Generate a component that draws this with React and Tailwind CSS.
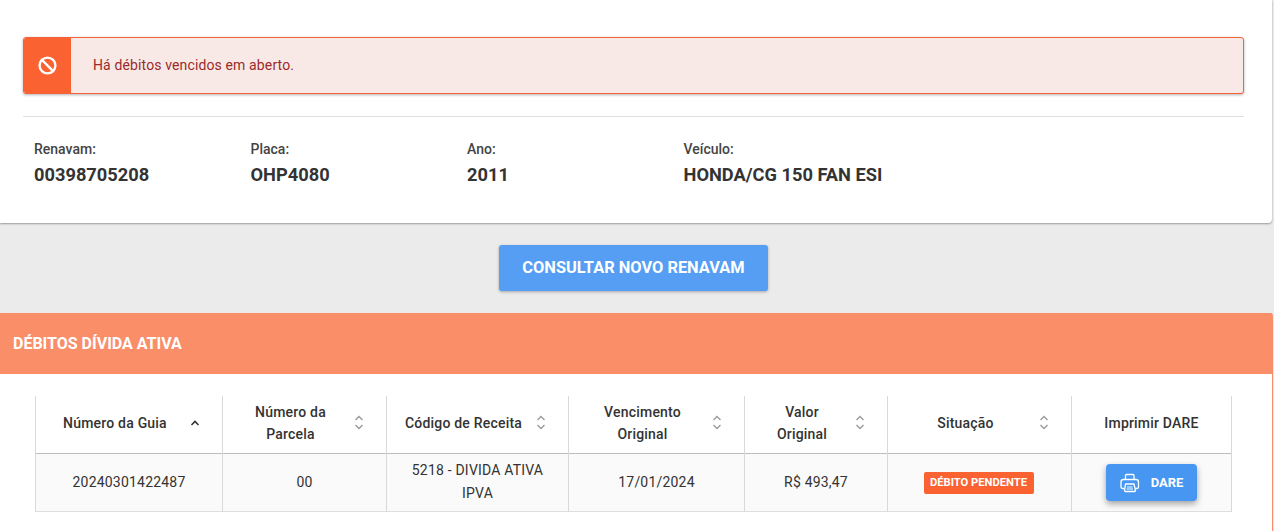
import React from "react";
import { Ban } from "lucide-react";

const cols = [
  { label: "Número da Guia", w: "w-[187px]", sort: "asc" },
  { label: "Número da Parcela", w: "w-[164px]", sort: "both", text: "w-[110px]" },
  { label: "Código de Receita", w: "w-[182px]", sort: "both" },
  { label: "Vencimento Original", w: "w-[176px]", sort: "both", text: "w-[120px]" },
  { label: "Valor Original", w: "w-[143px]", sort: "both", text: "w-[90px]" },
  { label: "Situação", w: "w-[184px]", sort: "both" },
  { label: "Imprimir DARE", w: "w-[160px]" },
];

function SortIcon({ type }) {
  if (type === "asc") {
    return (
      <svg width="10" height="6" viewBox="0 0 10 6" fill="none" stroke="#333" strokeWidth="1.6">
        <path d="M1.5 5 5 1.5 8.500 5" />
      </svg>
    );
  }
  return (
    <svg width="10" height="15" viewBox="0 0 10 15" fill="none" stroke="#9a9a9a" strokeWidth="1.4">
      <path d="M1.500 5 5 1.500 8.500 5" />
      <path d="M1.500 10 5 13.500 8.500 10" />
    </svg>
  );
}

function PrintIcon() {
  return (
    <svg width="20" height="20" viewBox="0 0 20 20" fill="none" stroke="#fff" strokeWidth="1.3" strokeLinejoin="round">
      <path d="M5.500 6.500V2.500a1 1 0 0 1 1-1h6.500a1 1 0 0 1 1 1v4" />
      <path d="M4 15.500H2.500a1.500 1.500 0 0 1-1.500-1.500v-5a2.500 2.500 0 0 1 2.500-2.500h12.500a2.500 2.500 0 0 1 2.500 2.500v5a1.500 1.500 0 0 1-1.500 1.500H15.500" />
      <path d="M5.500 11h8.500l1.500 6.500a1 1 0 0 1-1 1h-9a1 1 0 0 1-1-1z" />
      <path d="M7 14h5.500M6.500 16h6.500" strokeWidth="1" />
    </svg>
  );
}

function Info({ label, value, w }) {
  return (
    <div className={`${w} px-[11px]`}>
      <div className="text-[14px] font-medium leading-[20px] text-[#444]">{label}</div>
      <div className="mt-[3px] text-[18.250px] font-bold leading-[25px] text-[#333]">{value}</div>
    </div>
  );
}

export default function App() {
  return (
    <div className="h-[531px] overflow-hidden bg-[#ebebeb] font-['Roboto',sans-serif]">
      <div className="mr-[2px] h-[223px] rounded-br-[4px] bg-white px-[23px] pr-[28px] pt-[37px] shadow-[0_1px_2px_rgba(0,0,0,0.35)]">
        <div className="flex h-[57px] overflow-hidden rounded-[3px] border border-[#f4623a] bg-[#f8e9e6] shadow-[0_1px_3px_rgba(0,0,0,0.3)]">
          <div className="flex w-[47px] items-center justify-center bg-[#fb6232]">
            <Ban size={19} color="#fff" strokeWidth={3} />
          </div>
          <div className="flex items-center pl-[22px] text-[14px] tracking-[0.13px] text-[#9c2a2a]">
            Há débitos vencidos em aberto.
          </div>
        </div>
        <div className="mt-[22px] flex border-t border-[#e0e0e0] pt-[22px]">
          <Info label="Renavam:" value="00398705208" w="w-[216.500px]" />
          <Info label="Placa:" value="OHP4080" w="w-[216.500px]" />
          <Info label="Ano:" value="2011" w="w-[216.500px]" />
          <Info label="Veículo:" value="HONDA/CG 150 FAN ESI" w="w-[400px]" />
        </div>
      </div>

      <div className="flex h-[90px] items-center justify-center pr-[7px]">
        <button className="h-[46px] w-[269px] rounded-[3px] bg-[#559ef3] pt-[1px] text-[16.400px] font-bold text-white shadow-[0_1px_3px_rgba(0,0,0,0.3)]">
          CONSULTAR NOVO RENAVAM
        </button>
      </div>

      <div className="mr-[1px] h-[218px] rounded-tr-[3px] border-r border-[#f98e69] bg-white">
        <div className="flex h-[61px] items-center bg-[#f98e69] pl-[13px] text-[16px] font-bold text-white">
          DÉBITOS DÍVIDA ATIVA
        </div>
        <div className="pl-[35px] pt-[22px]">
          <table className="w-[1197px] table-fixed border-collapse text-[14px] text-[#333]">
            <thead>
              <tr className="h-[57px] border-b border-[#bdbdbd]">
                {cols.map((c) => (
                  <th key={c.label} className={`${c.w} border-x border-[#d9d9d9] p-0 pb-[3px] font-medium`}>
                    <div className="relative flex items-center justify-center leading-[22px] tracking-[0.2px]">
                      <span className={`${c.text || ""} ${c.sort ? "pr-[28px]" : ""}`}>{c.label}</span>
                      {c.sort && (
                        <span className="absolute right-[22px] flex items-center">
                          <SortIcon type={c.sort} />
                        </span>
                      )}
                    </div>
                  </th>
                ))}
              </tr>
            </thead>
            <tbody>
              <tr className="h-[58px] border-b border-[#dedede] bg-[#fafafa] text-center leading-[23px] tracking-[0.2px]">
                <td className="border-x border-[#d9d9d9] p-0">20240301422487</td>
                <td className="border-x border-[#d9d9d9] p-0">00</td>
                <td className="border-x border-[#d9d9d9] p-0">
                  5218 - DIVIDA ATIVA
                  <br />
                  IPVA
                </td>
                <td className="border-x border-[#d9d9d9] p-0">17/01/2024</td>
                <td className="border-x border-[#d9d9d9] p-0">R$ 493,47</td>
                <td className="border-x border-[#d9d9d9] p-0 pr-[2px]">
                  <span className="inline-flex h-[22px] w-[110px] items-center justify-center rounded-[2px] bg-[#fb6232] align-middle text-[11.200px] font-bold tracking-normal text-white">
                    DÉBITO PENDENTE
                  </span>
                </td>
                <td className="border-x border-[#d9d9d9] p-0">
                  <button className="inline-flex h-[37px] w-[91px] items-center justify-center gap-[11px] rounded-[4px] bg-[#4696f2] pt-[1px] text-[13px] font-bold tracking-normal text-white shadow-[0_3px_6px_rgba(0,0,0,0.35)]">
                    <PrintIcon />
                    DARE
                  </button>
                </td>
              </tr>
            </tbody>
          </table>
        </div>
      </div>
    </div>
  );
}
